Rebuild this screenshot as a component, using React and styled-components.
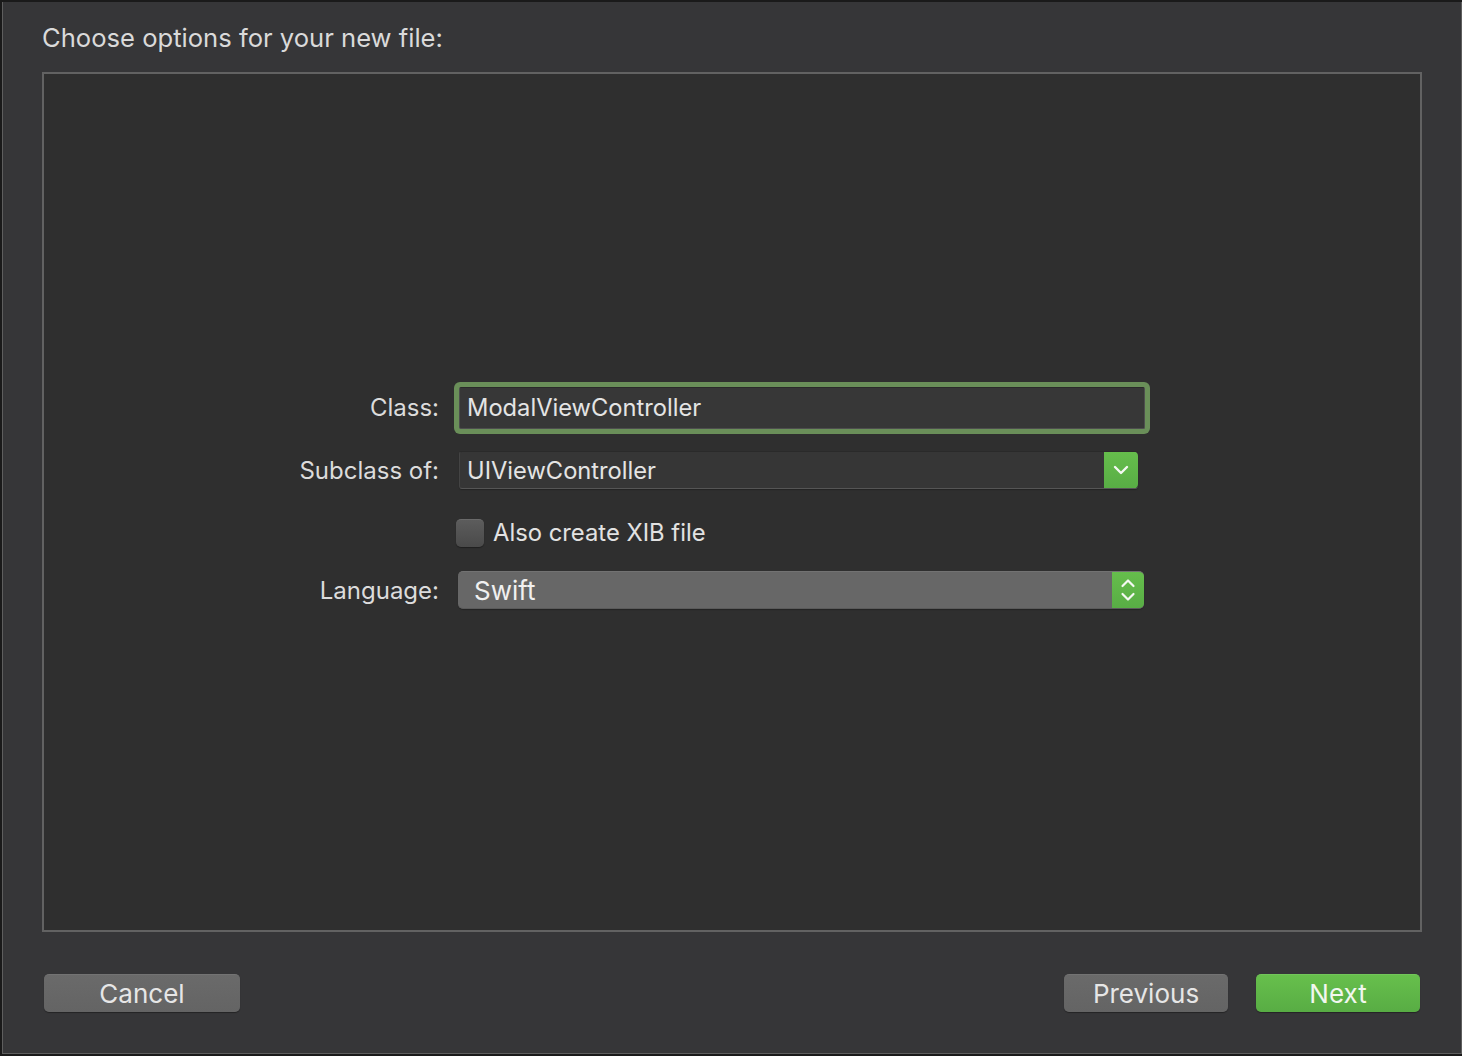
import React from "react";
import styled, { createGlobalStyle } from "styled-components";

const GlobalStyle = createGlobalStyle`
  html, body {
    margin: 0;
    padding: 0;
    background: #1a1a1a;
    font-family: Inter, "Noto Sans", "Liberation Sans", sans-serif;
    -webkit-font-smoothing: antialiased;
  }
`;

const Window = styled.div`
  box-sizing: border-box;
  margin: 2px 0 0 2px;
  width: 1460px;
  height: 1052px;
  background: #363638;
  border: 1px solid #5e5e5e;
  border-top: none;
  display: flex;
  flex-direction: column;
  padding: 0 39px 0 39px;
`;

const Title = styled.div`
  height: 70px;
  box-sizing: border-box;
  padding-top: 21px;
  font-size: 25.6px;
  line-height: 30px;
  color: #dadada;
`;

const Panel = styled.div`
  box-sizing: border-box;
  height: 860px;
  background: #2f2f2f;
  border: 2px solid #626262;
  display: flex;
  flex-direction: column;
  padding: 307px 0 0 0;
`;

const Row = styled.div`
  display: grid;
  grid-template-columns: 395px 1fr;
  column-gap: ${(p) => p.$gap || 20}px;
  align-items: center;
  height: ${(p) => p.$h}px;
  margin-top: ${(p) => p.$mt || 0}px;
`;

const Label = styled.div`
  text-align: right;
  font-size: 24px;
  color: #dcdcdc;
`;

const TextField = styled.div`
  box-sizing: border-box;
  width: 686px;
  height: 42px;
  background: #373737;
  border: 1px solid #4e4e4e;
  border-top-color: #2a2a2a;
  box-shadow: 0 0 0 5px #6a8f59;
  border-radius: 2px;
  display: flex;
  align-items: center;
  padding-left: 7px;
  font-size: 23.7px;
  color: #e4e4e4;
`;

const Popup = styled.div`
  box-sizing: border-box;
  width: ${(p) => p.$w}px;
  height: 38px;
  display: flex;
  align-items: stretch;
  border-radius: ${(p) => (p.$filled ? 5 : 3)}px;
  background: ${(p) => (p.$filled ? "#676767" : "#363636")};
  border-top: 1px solid ${(p) => (p.$filled ? "#727272" : "#2a2a2a")};
  border-bottom: 1px solid ${(p) => (p.$filled ? "#5a5a5a" : "#555")};
  border-left: ${(p) => (p.$filled ? "none" : "1px solid #444")};
  box-shadow: 0 1px 1px rgba(0, 0, 0, 0.25);
  overflow: hidden;
`;

const PopupText = styled.div`
  flex: 1;
  display: flex;
  align-items: center;
  padding-left: ${(p) => p.$pad}px;
  font-size: ${(p) => p.$size}px;
  color: ${(p) => p.$color};
`;

const Arrow = styled.div`
  width: ${(p) => p.$w}px;
  background: linear-gradient(#66be4c, #58ad45);
  display: flex;
  align-items: center;
  justify-content: center;
  border-radius: 0 5px 5px 0;
  margin: -1px 0;
`;

const Check = styled.div`
  box-sizing: border-box;
  width: 28px;
  height: 28px;
  border-radius: 5px;
  background: linear-gradient(#5c5c5c, #4a4a4a);
  border-top: 1px solid #6a6a6a;
  box-shadow: 0 1px 1px rgba(0, 0, 0, 0.35);
`;

const CheckRow = styled.label`
  display: flex;
  align-items: center;
  gap: 9px;
  margin-left: -3px;
  font-size: 23.8px;
  color: #e2e2e2;
`;

const Footer = styled.div`
  display: flex;
  align-items: center;
  margin: 42px 2px 0 2px;
  gap: 28px;
`;

const Spacer = styled.div`
  flex: 1;
`;

const Button = styled.div`
  box-sizing: border-box;
  width: ${(p) => p.$w}px;
  height: 38px;
  border-radius: 5px;
  display: flex;
  align-items: center;
  justify-content: center;
  font-size: 26px;
  color: ${(p) => (p.$primary ? "#f2f7ef" : "#e6e6e6")};
  background: ${(p) =>
    p.$primary ? "linear-gradient(#67bf4c, #58ad44)" : "linear-gradient(#6a6a6a, #646464)"};
  border-top: 1px solid ${(p) => (p.$primary ? "#72c65a" : "#737373")};
  box-shadow: 0 1px 1px rgba(0, 0, 0, 0.35);
`;

function ChevronDown() {
  return (
    <svg width="16" height="10" viewBox="0 0 16 10">
      <path d="M2 2 L8 8 L14 2" fill="none" stroke="#f4f8f2" strokeWidth="2.4" strokeLinecap="round" strokeLinejoin="round" />
    </svg>
  );
}

function UpDown() {
  return (
    <svg width="16" height="28" viewBox="0 0 16 28">
      <path d="M2.5 10 L8 4.5 L13.5 10" fill="none" stroke="#f4f8f2" strokeWidth="2.2" strokeLinecap="round" strokeLinejoin="round" />
      <path d="M2.5 18 L8 23.5 L13.5 18" fill="none" stroke="#f4f8f2" strokeWidth="2.2" strokeLinecap="round" strokeLinejoin="round" />
    </svg>
  );
}

export default function App() {
  return (
    <>
      <GlobalStyle />
      <Window>
        <Title>Choose options for your new file:</Title>
        <Panel>
          <Row $h={53}>
            <Label>Class:</Label>
            <TextField>ModalViewController</TextField>
          </Row>
          <Row $h={38} $mt={17}>
            <Label>Subclass of:</Label>
            <Popup $w={679}>
              <PopupText $pad={7} $size={23.7} $color="#e4e4e4">UIViewController</PopupText>
              <Arrow $w={34}>
                <ChevronDown />
              </Arrow>
            </Popup>
          </Row>
          <Row $h={28} $mt={29}>
            <div />
            <CheckRow>
              <Check />
              Also create XIB file
            </CheckRow>
          </Row>
          <Row $h={38} $mt={25} $gap={19}>
            <Label>Language:</Label>
            <Popup $w={686} $filled>
              <PopupText $pad={16} $size={26} $color="#f0f0f0">Swift</PopupText>
              <Arrow $w={32}>
                <UpDown />
              </Arrow>
            </Popup>
          </Row>
        </Panel>
        <Footer>
          <Button $w={196}>Cancel</Button>
          <Spacer />
          <Button $w={164}>Previous</Button>
          <Button $w={164} $primary>Next</Button>
        </Footer>
      </Window>
    </>
  );
}
